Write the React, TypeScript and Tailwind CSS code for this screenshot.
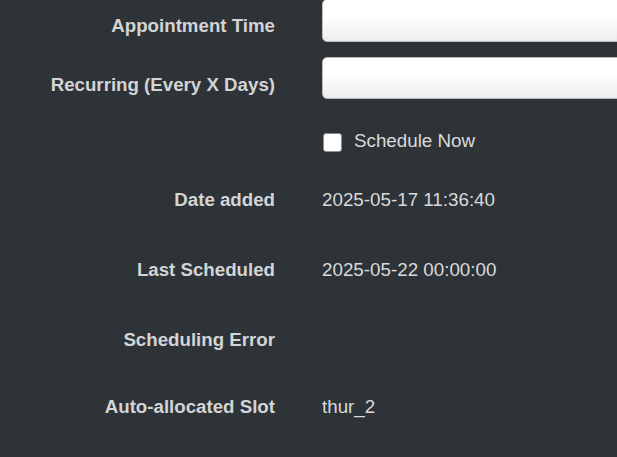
import React from "react";

const labelCls =
  "w-[275px] shrink-0 text-right font-bold text-[#d2d4d6] text-[18.7px] leading-[22px]";
const valueCls = "text-[#d8dadc] text-[18.8px] leading-[22px]";

function Row({
  label,
  value,
  className,
}: {
  label: string;
  value?: string;
  className: string;
}) {
  return (
    <div className={`flex gap-[47px] ${className}`}>
      <div className={labelCls}>{label}</div>
      <div className={valueCls}>{value ?? ""}</div>
    </div>
  );
}

function TextInput({ className }: { className: string }) {
  return (
    <div
      className={`w-[420px] shrink-0 rounded-[5px] border border-[#b9bcbf] bg-gradient-to-b from-white from-40% to-[#ededed] ${className}`}
    />
  );
}

export default function App() {
  return (
    <div
      className="w-full h-[457px] overflow-hidden bg-[#2e3337]"
      style={{ fontFamily: '"Liberation Sans", Arial, sans-serif' }}
    >
      <div className="flex flex-col">
        <div className="flex gap-[47px] -mt-px">
          <div className={`${labelCls} pt-[15.5px]`}>Appointment Time</div>
          <TextInput className="h-[43px]" />
        </div>
        <div className="flex gap-[47px] mt-[15px]">
          <div className={`${labelCls} pt-[16.5px]`}>Recurring (Every X Days)</div>
          <TextInput className="h-[42px]" />
        </div>
        <div className="flex gap-[47px] mt-[30.5px]">
          <div className={labelCls}></div>
          <label className="flex items-start gap-[12px]">
            <span className="ml-px mt-[3.5px] w-[19px] h-[19px] rounded-[3px] border border-[#8a8d90] bg-white shrink-0" />
            <span className={valueCls}>Schedule Now</span>
          </label>
        </div>
        <Row className="mt-[37px]" label="Date added" value="2025-05-17 11:36:40" />
        <Row className="mt-[48px]" label="Last Scheduled" value="2025-05-22 00:00:00" />
        <Row className="mt-[48px]" label="Scheduling Error" />
        <Row className="mt-[45px]" label="Auto-allocated Slot" value="thur_2" />
      </div>
    </div>
  );
}
